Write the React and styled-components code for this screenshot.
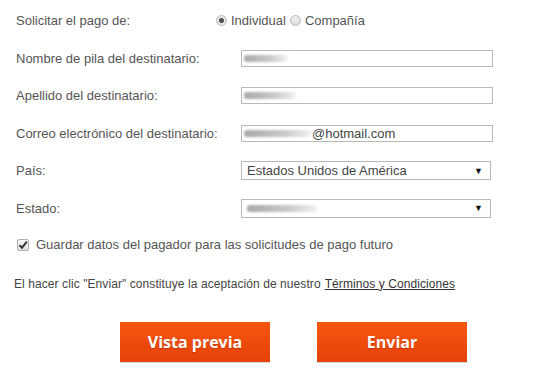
import React from 'react';
import styled, { createGlobalStyle } from 'styled-components';

const GlobalStyle = createGlobalStyle`
  html, body {
    margin: 0;
    padding: 0;
    background: #fff;
  }
  body {
    font-family: "Liberation Sans", Arial, sans-serif;
    font-size: 13px;
    color: #555;
  }
`;

const App = () => {
  return (
    <>
      <GlobalStyle />
      <Form>
        <Row>
          <Label $width={200}>Solicitar el pago de:</Label>
          <RadioGroup>
            <RadioOption>
              <Radio $checked />
              Individual
            </RadioOption>
            <RadioOption>
              <Radio />
              Compañía
            </RadioOption>
          </RadioGroup>
        </Row>

        <Row>
          <Label>Nombre de pila del destinatario:</Label>
          <TextBox>
            <Blur $width={44} />
          </TextBox>
        </Row>

        <Row>
          <Label>Apellido del destinatario:</Label>
          <TextBox>
            <Blur $width={52} />
          </TextBox>
        </Row>

        <Row>
          <Label>Correo electrónico del destinatario:</Label>
          <TextBox>
            <Blur $width={68} />
            @hotmail.com
          </TextBox>
        </Row>

        <Row>
          <Label>País:</Label>
          <SelectBox>
            <span>Estados Unidos de América</span>
            <Arrow>▼</Arrow>
          </SelectBox>
        </Row>

        <Row>
          <Label>Estado:</Label>
          <SelectBox>
            <Blur $width={70} />
            <Arrow>▼</Arrow>
          </SelectBox>
        </Row>

        <CheckRow>
          <CheckBox>
            <svg width="10" height="10" viewBox="0 0 10 10">
              <path d="M1.5 5.2 L4 7.8 L8.8 1.6" fill="none" stroke="#333" strokeWidth="2" />
            </svg>
          </CheckBox>
          Guardar datos del pagador para las solicitudes de pago futuro
        </CheckRow>

        <Terms>
          El hacer clic "Enviar" constituye la aceptación de nuestro{' '}
          <a href="#terminos">Términos y Condiciones</a>
        </Terms>

        <Buttons>
          <OrangeButton>Vista previa</OrangeButton>
          <OrangeButton>Enviar</OrangeButton>
        </Buttons>
      </Form>
    </>
  );
};

export default App;

// Layout

const Form = styled.div`
  width: 538px;
  height: 381px;
  padding: 2px 0 0 16px;
  box-sizing: border-box;
  display: flex;
  flex-direction: column;
`;

const Row = styled.div`
  display: flex;
  align-items: center;
  height: 37.5px;
  flex-shrink: 0;
`;

const Label = styled.div`
  width: ${(p) => p.$width || 225}px;
  flex-shrink: 0;
  color: #555;
`;

const RadioGroup = styled.div`
  display: flex;
  align-items: center;
  gap: 4px;
`;

const RadioOption = styled.label`
  display: flex;
  align-items: center;
  gap: 4px;
  color: #555;
`;

const Radio = styled.span`
  width: 11px;
  height: 11px;
  border-radius: 50%;
  box-sizing: border-box;
  border: 1px solid #b8b8b8;
  background: ${(p) =>
    p.$checked
      ? 'radial-gradient(circle, #555 0 2.2px, #e6e6e6 2.8px)'
      : 'linear-gradient(#f2f2f2, #dcdcdc)'};
`;

const TextBox = styled.div`
  width: 252px;
  height: 17px;
  box-sizing: border-box;
  border: 1px solid #b9b9b9;
  display: flex;
  align-items: center;
  padding-left: 2px;
  color: #444;
  background: #fff;
`;

const Blur = styled.span`
  display: inline-block;
  width: ${(p) => p.$width}px;
  height: 7px;
  border-radius: 3px;
  background: linear-gradient(90deg, #a9a9a9, #cacaca 60%, #f2f2f2);
  filter: blur(1.2px);
  flex-shrink: 0;
`;

const SelectBox = styled.div`
  width: 250px;
  height: 19px;
  box-sizing: border-box;
  border: 1px solid #b9b9b9;
  display: flex;
  align-items: center;
  justify-content: space-between;
  padding: 0 7px 0 5px;
  color: #444;
  background: #fff;
`;

const Arrow = styled.span`
  font-size: 9px;
  color: #111;
`;

const CheckRow = styled.label`
  display: flex;
  align-items: center;
  gap: 7px;
  height: 35px;
  flex-shrink: 0;
  margin-left: 1px;
  color: #555;
`;

const CheckBox = styled.span`
  width: 12px;
  height: 12px;
  box-sizing: border-box;
  border: 1px solid #b0b0b0;
  border-radius: 2px;
  background: linear-gradient(#f6f6f6, #dedede);
  display: flex;
  align-items: center;
  justify-content: center;
`;

const Terms = styled.div`
  height: 43px;
  flex-shrink: 0;
  display: flex;
  align-items: center;
  margin-left: -2px;
  font-size: 12px;
  letter-spacing: 0.08px;
  color: #444;
  a {
    color: #333;
    text-decoration: underline;
    margin-left: 4px;
  }
`;

const Buttons = styled.div`
  display: flex;
  gap: 47px;
  padding-left: 104px;
  margin-top: 17px;
`;

const OrangeButton = styled.button`
  width: 150px;
  height: 40px;
  border: none;
  background: linear-gradient(#f7560e, #e4420a);
  color: #fff;
  font-family: "Open Sans", sans-serif;
  font-weight: 700;
  font-size: 16px;
  text-shadow: 0 1px 1px rgba(120, 30, 0, 0.35);
  box-shadow: 0 1px 0 rgba(0, 0, 0, 0.15);
  cursor: pointer;
`;
